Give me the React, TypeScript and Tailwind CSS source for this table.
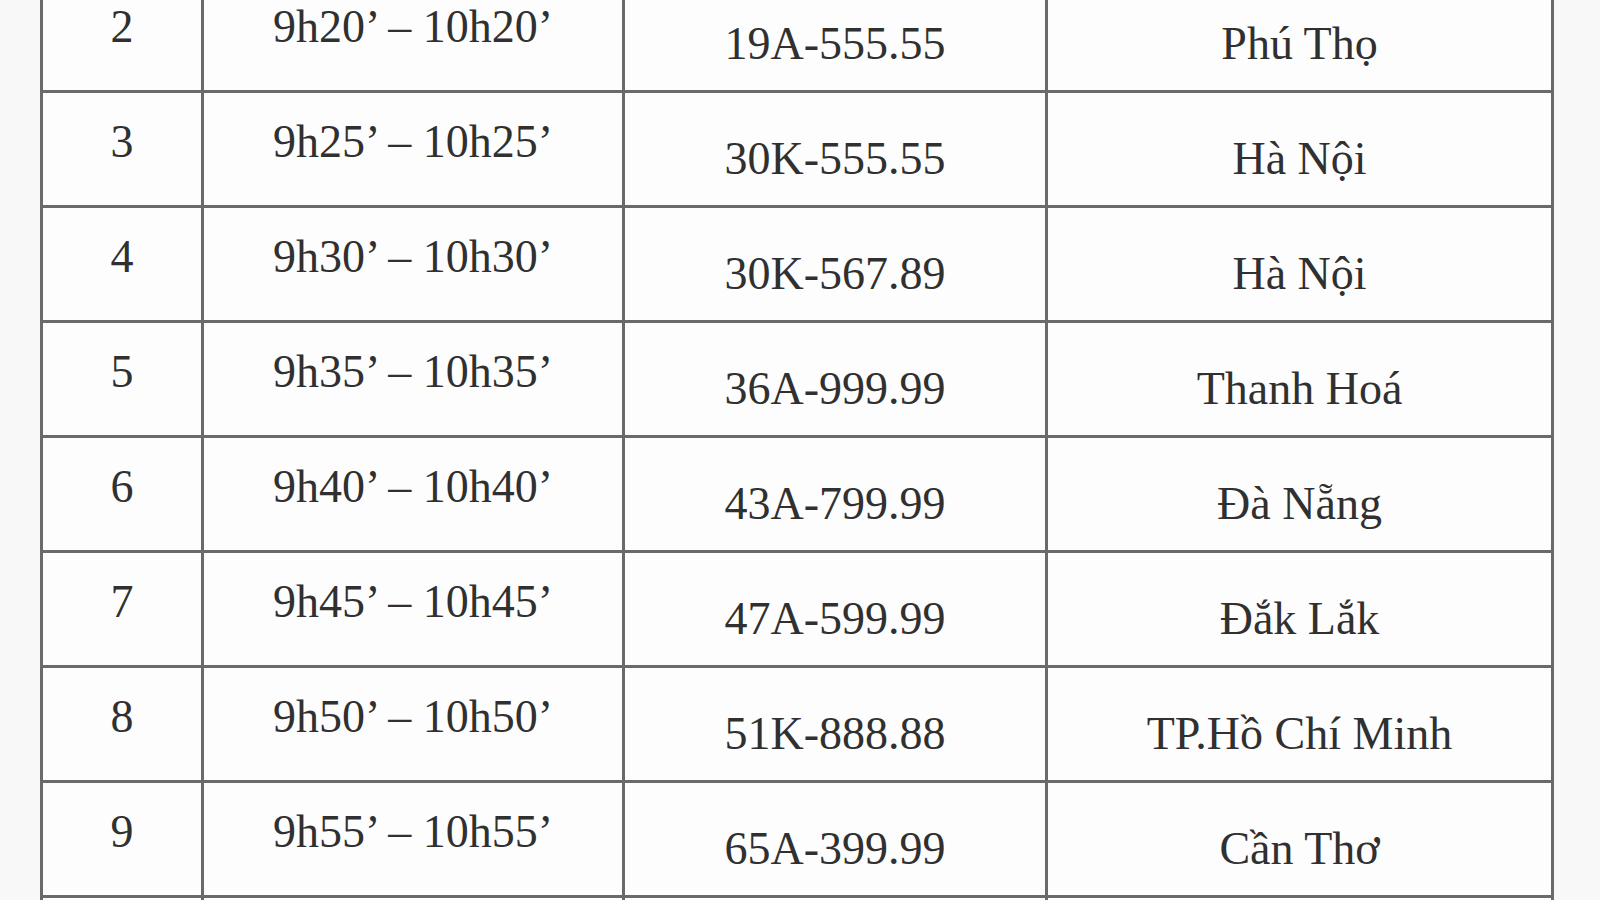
import React from "react";

const rows: [string, string, string, string][] = [
  ["2", "9h20’ – 10h20’", "19A-555.55", "Phú Thọ"],
  ["3", "9h25’ – 10h25’", "30K-555.55", "Hà Nội"],
  ["4", "9h30’ – 10h30’", "30K-567.89", "Hà Nội"],
  ["5", "9h35’ – 10h35’", "36A-999.99", "Thanh Hoá"],
  ["6", "9h40’ – 10h40’", "43A-799.99", "Đà Nẵng"],
  ["7", "9h45’ – 10h45’", "47A-599.99", "Đắk Lắk"],
  ["8", "9h50’ – 10h50’", "51K-888.88", "TP.Hồ Chí Minh"],
  ["9", "9h55’ – 10h55’", "65A-399.99", "Cần Thơ"],
  ["10", "", "", ""],
];

export default function App() {
  return (
    <div
      className="w-[1600px] h-[900px] overflow-hidden bg-[#f8f8f8] text-[#303030]"
      style={{ fontFamily: '"Liberation Serif", "Times New Roman", serif' }}
    >
      <div className="ml-[40px] mt-[-22px] w-[1514px] border-l-[3px] border-r-[3px] border-[#6a6a6a] bg-[#fdfdfd]">
        {rows.map(([n, t, p, c], i) => (
          <div key={i} className="flex h-[115px] border-b-[3px] border-[#6a6a6a]">
            <div className="w-[161px] shrink-0 border-r-[3px] border-[#6a6a6a] pt-[26px] text-center text-[46px] leading-none">
              {i < 8 ? n : ""}
            </div>
            <div className="w-[421px] shrink-0 border-r-[3px] border-[#6a6a6a] pt-[26px] text-center text-[46px] leading-none">
              {t}
            </div>
            <div className="w-[423px] shrink-0 border-r-[3px] border-[#6a6a6a] pt-[43px] text-center text-[46px] leading-none">
              {p}
            </div>
            <div className="flex-1 pt-[43px] text-center text-[46px] leading-none">{c}</div>
          </div>
        ))}
      </div>
    </div>
  );
}
